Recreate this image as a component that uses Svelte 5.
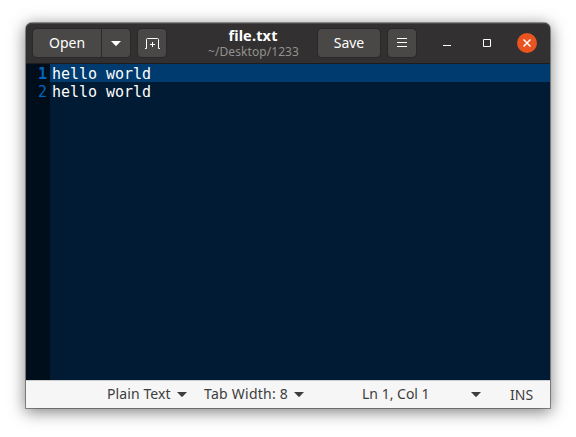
<script>
  const lines = ['hello world', 'hello world'];
  const current = 0;
</script>

{#snippet arrow()}
  <svg class="arrow" width="10" height="5" viewBox="0 0 10 5"><path d="M0 0h10L5.7 4.6q-.7.7-1.4 0Z" fill="currentColor" /></svg>
{/snippet}

<main>
  <section class="window">
    <header>
      <div class="split">
        <button class="open"><span>Open</span></button>
        <button class="drop" aria-label="Recent files">{@render arrow()}</button>
      </div>
      <button class="icon new" aria-label="New tab">
        <svg width="16" height="16" viewBox="0 0 16 16" fill="none" stroke="currentColor">
          <path d="M1 13.5h1.5V4.5q0-1 1-1h10q1 0 1 1v9H16M8.5 7v5M6 9.5h5" />
        </svg>
      </button>
      <div class="title">
        <strong>file.txt</strong>
        <small>~/Desktop/1233</small>
      </div>
      <button class="save"><span>Save</span></button>
      <button class="icon menu" aria-label="Menu">
        <svg width="10" height="10" viewBox="0 0 10 10"><path d="M0 .5h10M0 4.5h10M0 8.5h10" stroke="currentColor" /></svg>
      </button>
      <div class="controls">
        <button aria-label="Minimize"><svg width="8" height="8"><path d="M0 6.5h8" stroke="currentColor" /></svg></button>
        <button aria-label="Maximize"><svg width="8" height="8"><path d="M.5.5h7v7h-7Z" fill="none" stroke="currentColor" /></svg></button>
        <button class="close" aria-label="Close"><svg width="8" height="8"><path d="m.5.5 7 7m0-7-7 7" stroke="currentColor" stroke-width="1.5" /></svg></button>
      </div>
    </header>
    <div class="editor">
      {#each lines as line, i}
        <div class="line" class:current={i === current}>
          <span class="number">{i + 1}</span><code>{line}</code>
        </div>
      {/each}
      <div class="rest"></div>
    </div>
    <footer>
      <span class="plain">Plain Text</span>{@render arrow()}
      <span class="tab">Tab Width: 8</span>{@render arrow()}
      <span class="position">Ln 1, Col 1</span>{@render arrow()}
      <span class="ins">INS</span>
    </footer>
  </section>
</main>

<style>
  :global(body) { background: #fff; overflow: hidden; }
  main {
    box-sizing: border-box;
    width: 576px;
    height: 437px;
    padding: 23px 26px 29px;
    overflow: hidden;
    font-family: "Noto Sans", sans-serif;
  }
  .window {
    display: flex;
    flex-direction: column;
    width: 524px;
    height: 385px;
    border-radius: 6px 6px 0 0;
    background: #001b33;
    box-shadow: 0 0 0 1px rgba(0, 0, 0, .36), 0 3px 16px 1px rgba(0, 0, 0, .5);
  }
  header {
    display: flex;
    box-sizing: border-box;
    flex: none;
    height: 41px;
    padding: 6px 13px 0 7px;
    border-bottom: 1px solid #1e1c1c;
    border-radius: 6px 6px 0 0;
    background: #323030;
    box-shadow: inset 0 1px #4b4949;
    color: #fff;
  }
  button {
    display: flex;
    align-items: center;
    justify-content: center;
    box-sizing: border-box;
    flex: none;
    height: 28px;
    padding: 0;
    border: 0;
    border-radius: 4px;
    background: #494846;
    color: #fff;
    font: 14px/28px "Noto Sans", sans-serif;
    box-shadow: 0 0 0 1px #2a2828;
  }
  svg { display: block; flex: none; }
  .split { display: flex; gap: 1px; width: 97px; }
  .open { width: 68px; border-radius: 4px 0 0 4px; }
  .drop { width: 28px; border-radius: 0 4px 4px 0; }
  .icon { width: 28px; }
  .new { margin-left: 8px; }
  .title {
    display: flex;
    flex-direction: column;
    align-items: center;
    width: 129px;
    padding-left: 23px;
    white-space: nowrap;
  }
  .title strong { font-size: 14.5px; line-height: 16px; margin: -2px 1px 1px 0; letter-spacing: .15px; }
  .title small { color: #929291; font-size: 12px; line-height: 16px; letter-spacing: .07px; }
  .save { width: 62px; }
  .menu { margin-left: 8px; }
  .controls { display: flex; align-items: center; gap: 20px; height: 28px; margin-left: auto; }
  .controls button { width: 20px; height: 20px; background: none; box-shadow: none; }
  .controls .close { border-radius: 50%; background: #e95420; }
  .editor {
    display: flex;
    flex: 1;
    flex-direction: column;
    color: #fff;
    font: 15px/20px "DejaVu Sans Mono", monospace;
  }
  .line { display: flex; height: 18px; }
  code { flex: 1; padding-left: 2px; font: inherit; letter-spacing: -.03px; white-space: pre; }
  .current code { background: #003b70; }
  .number {
    box-sizing: border-box;
    width: 24px;
    height: 18px;
    padding-right: 3px;
    background: #000d1a;
    color: #0065bf;
    text-align: right;
  }
  .current .number { font-weight: bold; }
  .rest { flex: 1; background: linear-gradient(90deg, #000d1a 24px, #001b33 24px); }
  footer {
    display: flex;
    align-items: center;
    box-sizing: border-box;
    flex: none;
    height: 28px;
    padding-left: 81px;
    border-top: 1px solid #cdcdcd;
    background: #f6f6f6;
    color: #3d3d3d;
    font-size: 14px;
    line-height: 25px;
    white-space: nowrap;
  }
  footer span { padding-bottom: 2px; }
  .plain { width: 70px; letter-spacing: .1px; }
  .tab { width: 90px; margin-left: 17px; letter-spacing: .25px; }
  .position { width: 109px; margin-left: 58px; }
  footer .ins { margin-left: 29px; padding-bottom: 0; }
</style>
